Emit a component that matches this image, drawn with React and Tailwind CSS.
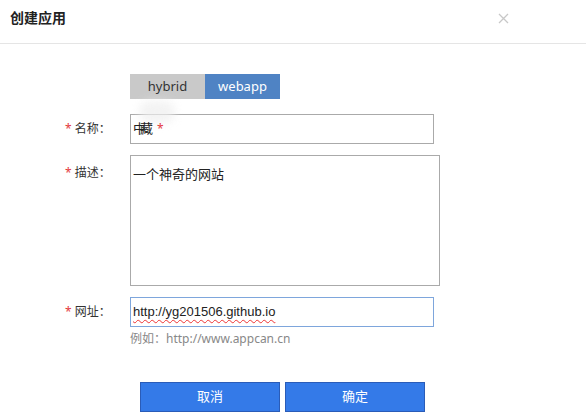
import React from 'react';

const font = { fontFamily: '"Noto Sans", "Noto Sans CJK SC", sans-serif' };

function Label({ children }) {
  return (
    <div className="w-[130px] shrink-0 pl-[65px] text-[12px] text-[#333] leading-none">
      <span className="text-[#e4393c] mr-[3px]">*</span>
      {children}
    </div>
  );
}

export default function App() {
  return (
    <div className="w-[586px] h-[418px] bg-white relative overflow-hidden" style={font}>
      <div className="h-[44px] border-b border-[#e5e5e5] flex items-start justify-between pl-[10px] pr-[77px] pt-[9px]">
        <h2 className="text-[14px] font-bold text-[#222] leading-[18px]">创建应用</h2>
        <svg width="11" height="11" viewBox="0 0 11 11" className="mt-[4px]">
          <path d="M1 1 L10 10 M10 1 L1 10" stroke="#c8c8c8" strokeWidth="1.3" />
        </svg>
      </div>

      <div className="flex flex-col pt-[30px]">
        <div className="flex pl-[130px]">
          <div className="w-[75px] h-[25px] bg-[#c9c9c9] text-[#333] text-[13px] flex items-center justify-center">hybrid</div>
          <div className="w-[75px] h-[25px] bg-[#4f83c4] text-white text-[13px] flex items-center justify-center">webapp</div>
        </div>

        <div className="flex items-center mt-[15px]">
          <Label>名称：</Label>
          <div className="relative w-[304px] h-[30px] border border-[#aaa] flex items-center pl-[2px] text-[13px] text-[#222]">
            <div className="absolute -top-[14px] left-[8px] w-[36px] h-[22px] rounded-full bg-[#eee] blur-[4px] opacity-70" />
            <span className="relative tracking-[-6px]">中藏</span>
            <span className="relative text-[#e4393c] ml-[10px] text-[12px]">*</span>
          </div>
        </div>

        <div className="flex items-start mt-[11px]">
          <div className="pt-[12px]"><Label>描述：</Label></div>
          <div className="w-[310px] h-[131px] border border-[#aaa] pl-[2px] pt-[9px] text-[13px] text-[#222] leading-[18px]">
            一个神奇的网站
          </div>
        </div>

        <div className="flex items-center mt-[11px]">
          <Label>网址：</Label>
          <div className="w-[304px] h-[30px] border border-[#7ea6dc] flex items-center pl-[2px] text-[13px] text-[#222]">
            <span
              className="underline decoration-wavy decoration-[#e33] decoration-[1px] underline-offset-[3px]"
              style={{ fontFamily: '"Liberation Sans", sans-serif' }}
            >
              http://yg201506.github.io
            </span>
          </div>
        </div>

        <div className="pl-[130px] mt-[4px] text-[12px] text-[#888] leading-[16px]">例如：http://www.appcan.cn</div>

        <div className="flex pl-[140px] gap-[5px] mt-[35px]">
          <button className="w-[140px] h-[30px] bg-[#347ae8] border border-[#2a5cb8] text-white text-[13px]">取消</button>
          <button className="w-[140px] h-[30px] bg-[#347ae8] border border-[#2a5cb8] text-white text-[13px]">确定</button>
        </div>
      </div>
    </div>
  );
}
